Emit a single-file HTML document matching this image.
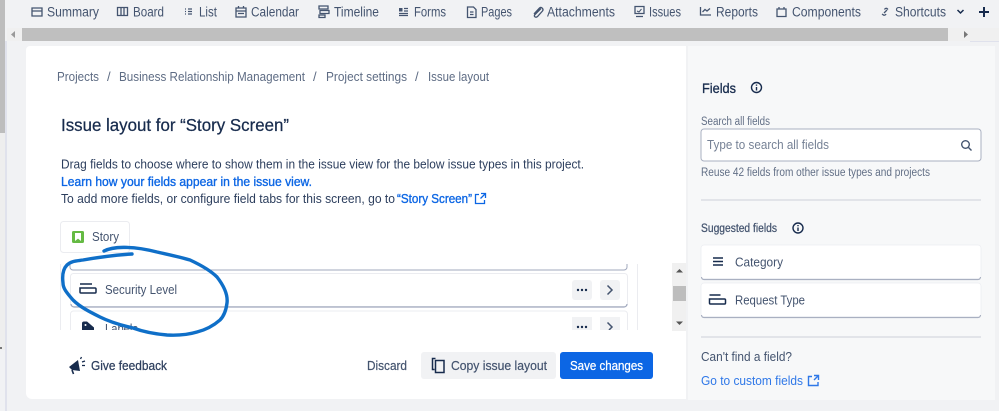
<!DOCTYPE html>
<html><head><meta charset="utf-8"><style>
html,body{margin:0;padding:0;background:#f1f2f4;width:999px;height:411px;overflow:hidden}
svg{display:block}
text{font-family:"Liberation Sans",sans-serif}
.n{font-size:13.5px;fill:#44546f}
.b{font-size:13px;fill:#5e6c84}
.d{font-size:13px;fill:#2c3e5d}
.l{font-size:13px;fill:#0c66e4;stroke:#0c66e4;stroke-width:.35px}
.f{font-size:12.5px;fill:#44546f}
.s{font-size:11.5px;fill:#626f86}
.i{fill:none;stroke:#44546f;stroke-width:1.3}
.k{fill:none;stroke:#172b4d;stroke-width:1.5}
</style></head><body>
<svg width="999" height="411" viewBox="0 0 999 411" xmlns="http://www.w3.org/2000/svg">
<rect width="999" height="411" fill="#f1f2f4"/>
<!-- left strip -->
<rect x="0" y="0" width="5" height="350" fill="#eeeeee"/>
<rect x="0" y="0" width="5" height="133" fill="#bdbdbd"/>
<rect x="5" y="41" width="2" height="370" fill="#e0e2ec"/>
<rect x="0" y="347" width="2" height="2" fill="#777"/>
<!-- horizontal scrollbar -->
<rect x="7" y="28" width="992" height="13" fill="#f0f0f0"/>
<rect x="22" y="28" width="926" height="13" fill="#bfbfbf"/>
<path d="M11 34.5l4-3.5v7z" fill="#9a9a9a"/>
<path d="M968 34.500l-4-3.500v7z" fill="#777"/>
<rect x="970" y="41" width="29" height="1" fill="#dfe1ec"/>
<!-- nav -->
<g>
<path class="i" d="M32 8h10v8h-10zM32 11h10"/>
<text class="n" x="47" y="16.500" textLength="52" lengthAdjust="spacingAndGlyphs">Summary</text>
<path class="i" d="M117.500 7.500h10v8h-10zM121 7.500v8M124 7.500v8"/>
<text class="n" x="133" y="16.500" textLength="31" lengthAdjust="spacingAndGlyphs">Board</text>
<path class="i" d="M185 9h1M188 9h4M185 11.500h1M188 11.500h4M185 14h1M188 14h4" stroke-width="1"/>
<text class="n" x="199" y="16.500" textLength="18" lengthAdjust="spacingAndGlyphs">List</text>
<path class="i" d="M236 8h10v9h-10zM236 11h10M238.500 6v2M243.500 6v2M238 13.500h6"/>
<text class="n" x="251" y="16.500" textLength="48" lengthAdjust="spacingAndGlyphs">Calendar</text>
<path class="i" d="M319 6h9v3h-9zM320 10.500h9v3h-9zM319 15h6v2.500h-6z"/>
<text class="n" x="334" y="16.500" textLength="45" lengthAdjust="spacingAndGlyphs">Timeline</text>
<rect x="399" y="8" width="3.500" height="3.500" fill="#44546f"/>
<path class="i" d="M404 8.500h4M404 11h4M399 13.500h9M399 15.500h9" stroke-width="1"/>
<text class="n" x="414" y="16.500" textLength="32" lengthAdjust="spacingAndGlyphs">Forms</text>
<path class="i" d="M467.500 7h6l2.500 2.500v8h-8.500zM470 12h3.500M470 14.500h3.500"/>
<text class="n" x="481" y="16.500" textLength="31" lengthAdjust="spacingAndGlyphs">Pages</text>
<path class="i" d="M541 8.500l-6 6c-2 2 1 3.500 2.500 2l5-5.500c1.500-2-1-4.500-3-3l-5.500 6"/>
<text class="n" x="547" y="16.500" textLength="68" lengthAdjust="spacingAndGlyphs">Attachments</text>
<path class="i" d="M635 6.500h9v7h-9zM636 16.500h7"/>
<path d="M637 11l2 1 2.500-3" fill="none" stroke="#44546f"/>
<text class="n" x="649" y="16.500" textLength="32" lengthAdjust="spacingAndGlyphs">Issues</text>
<path class="i" d="M700.500 7v8h10.500M702.500 12l2.500-2.500 2 1.500 3-2.500"/>
<text class="n" x="716" y="16.500" textLength="42" lengthAdjust="spacingAndGlyphs">Reports</text>
<path class="i" d="M777 9h9v7.500h-9zM779 9V7M784 9V7"/>
<text class="n" x="792" y="16.500" textLength="69" lengthAdjust="spacingAndGlyphs">Components</text>
<path class="i" d="M882 14l1.500 1c1 .5 2 0 2.500-1M888 9.500l-1-1c-1-.5-2 0-2.500 1M884 13l3-3" stroke-width="1"/>
<text class="n" x="895" y="16.500" textLength="51" lengthAdjust="spacingAndGlyphs">Shortcuts</text>
<path d="M957.500 10l3 3 3-3" fill="none" stroke="#172b4d" stroke-width="1.500"/>
<path d="M979 12h10M984 7v10" fill="none" stroke="#172b4d" stroke-width="2"/>
</g>
<!-- main card -->
<path d="M26 50a4 4 0 0 1 4-4h656v353H32a6 6 0 0 1-6-6z" fill="#fff"/>
<rect x="688" y="46" width="307" height="354" fill="#f7f8f9"/>
<!-- breadcrumb -->
<text class="b" x="57" y="81" textLength="42" lengthAdjust="spacingAndGlyphs">Projects</text>
<text class="b" x="107" y="81">/</text>
<text class="b" x="119" y="81" textLength="186" lengthAdjust="spacingAndGlyphs">Business Relationship Management</text>
<text class="b" x="313" y="81">/</text>
<text class="b" x="326" y="81" textLength="81" lengthAdjust="spacingAndGlyphs">Project settings</text>
<text class="b" x="415" y="81">/</text>
<text class="b" x="428" y="81" textLength="61" lengthAdjust="spacingAndGlyphs">Issue layout</text>
<!-- title -->
<text x="61" y="131" font-size="17.500" fill="#172b4d" stroke="#172b4d" stroke-width=".25" textLength="228" lengthAdjust="spacingAndGlyphs">Issue layout for “Story Screen”</text>
<text class="d" x="61" y="168.500" textLength="523" lengthAdjust="spacingAndGlyphs">Drag fields to choose where to show them in the issue view for the below issue types in this project.</text>
<text class="l" x="61" y="186" textLength="251" lengthAdjust="spacingAndGlyphs">Learn how your fields appear in the issue view.</text>
<text class="d" x="61" y="203" textLength="334" lengthAdjust="spacingAndGlyphs">To add more fields, or configure field tabs for this screen, go to</text>
<text class="l" x="397" y="203" textLength="75" lengthAdjust="spacingAndGlyphs">“Story Screen”</text>
<path d="M479 194.500h-3.500v9h9v-3.500M481 193.500h4.500v4.500M485 194l-4.500 4.500" fill="none" stroke="#0c66e4" stroke-width="1.300"/>
<!-- Story tab -->
<rect x="60.500" y="221.500" width="69" height="31" rx="3" fill="#fff" stroke="#ebecf0"/>
<rect x="72" y="231" width="12" height="12" rx="1.500" fill="#65ba43"/>
<path d="M75 233h6v8l-3-2.400-3 2.400z" fill="#fff"/>
<text class="f" x="92" y="241" font-size="13" textLength="27" lengthAdjust="spacingAndGlyphs">Story</text>
<!-- list area -->
<rect x="60" y="264" width="1" height="66" fill="#ebecf0"/>
<rect x="637" y="264" width="1" height="66" fill="#ebecf0"/>
<path d="M70 264v3a3 3 0 0 0 3 3h551a3 3 0 0 0 3-3v-3" fill="#fff" stroke="#a0a8bd" stroke-width="1"/>
<rect x="70.500" y="273.500" width="557" height="33" rx="3" fill="#fff" stroke="#ebecf0"/>
<path d="M71 304a3 3 0 0 0 3 3h550a3 3 0 0 0 3-3" fill="none" stroke="#a0a8bd" stroke-width="1.200"/>
<path d="M70.500 330v-16a3 3 0 0 1 3-3h551a3 3 0 0 1 3 3v16" fill="#fff" stroke="#ebecf0"/>
<path class="k" d="M80 284h12M80 288h15a1 1 0 0 1 1 1v3a1 1 0 0 1-1 1H81a1 1 0 0 1-1-1z"/>
<text class="f" x="105" y="294" textLength="72" lengthAdjust="spacingAndGlyphs">Security Level</text>
<path d="M82 330v-6.500a2 2 0 0 1 2-2h3l7 6v2.500z" fill="#172b4d"/>
<circle cx="85.500" cy="325" r="1" fill="#fff"/>
<text class="f" x="105" y="333" textLength="33" lengthAdjust="spacingAndGlyphs">Labels</text>
<rect x="572" y="280" width="20" height="20" rx="3" fill="#f1f2f4"/>
<rect x="600" y="280" width="20" height="20" rx="3" fill="#f1f2f4"/>
<g fill="#172b4d"><circle cx="578" cy="290" r="1.200"/><circle cx="582" cy="290" r="1.200"/><circle cx="586" cy="290" r="1.200"/></g>
<path d="M607.500 285.500l4.500 4.500-4.500 4.500" fill="none" stroke="#44546f" stroke-width="1.500"/>
<rect x="572" y="317" width="20" height="13" fill="#f1f2f4"/>
<rect x="600" y="317" width="20" height="13" fill="#f1f2f4"/>
<g fill="#172b4d"><circle cx="578" cy="327" r="1.200"/><circle cx="582" cy="327" r="1.200"/><circle cx="586" cy="327" r="1.200"/></g>
<path d="M607.500 322.500l4.500 4.500-3 3" fill="none" stroke="#44546f" stroke-width="1.500"/>
<rect x="60" y="330" width="612" height="7" fill="#fff"/>
<!-- vertical scroll -->
<rect x="672" y="263" width="14" height="68" fill="#f0f0f0"/>
<rect x="673" y="286" width="13" height="15" fill="#bdbdbd"/>
<path d="M679.500 269l-3.500 3.500h7z" fill="#555"/>
<path d="M679.500 325l-3.500-3.500h7z" fill="#555"/>
<!-- blue circle -->
<path d="M104 251C112 247 130 245 157 252C170 255 180 257 190 260C205 267 212 272 217 277C224 286 228 295 227 303C226 311 224 316 220 320C212 327 205 330 197 332C187 335 177 335.500 167 335C155 334 144 332 133 328C120 325 110 322 100 317C90 312 80 307 73 300C66 292 63 288 63 283C62 275 63 269 67 265C71 261 76 261 83 260C100 257 115 255 132 254" fill="none" stroke="#0f6fc8" stroke-width="3.400" stroke-linecap="round" stroke-linejoin="round"/>
<!-- footer -->
<path d="M69 367l9-7 2 11-8-1z" fill="#172b4d"/>
<path d="M72 370l1.500 4" stroke="#172b4d" stroke-width="1.600" fill="none"/>
<path d="M80.500 359l1-2M82 362l3-1M82 365.500h3" stroke="#172b4d" stroke-width="1.300" fill="none"/>
<text x="91" y="370" font-size="13" fill="#2c3e5d" stroke="#2c3e5d" stroke-width=".25" textLength="76" lengthAdjust="spacingAndGlyphs">Give feedback</text>
<text x="367" y="370" font-size="13" fill="#44546f" stroke="#44546f" stroke-width=".2" textLength="40" lengthAdjust="spacingAndGlyphs">Discard</text>
<rect x="421" y="352" width="135" height="27" rx="3" fill="#f1f2f4"/>
<path d="M435.500 358.500h-3v11h2M435.500 360.500h8.500v12h-8.500z" fill="none" stroke="#172b4d" stroke-width="1.500"/>
<text x="451" y="370" font-size="13" fill="#44546f" stroke="#44546f" stroke-width=".2" textLength="96" lengthAdjust="spacingAndGlyphs">Copy issue layout</text>
<rect x="560" y="352" width="93" height="27" rx="3" fill="#0c66e4"/>
<text x="570" y="370" font-size="13" fill="#fff" stroke="#fff" stroke-width=".25" textLength="73" lengthAdjust="spacingAndGlyphs">Save changes</text>
<!-- right panel -->
<text x="702" y="93" font-size="14" fill="#172b4d" stroke="#172b4d" stroke-width=".3" textLength="34" lengthAdjust="spacingAndGlyphs">Fields</text>
<circle cx="756.500" cy="87.500" r="5" fill="none" stroke="#172b4d" stroke-width="1.400"/>
<path d="M756.500 87v3.500M756.500 84.500v1.200" stroke="#172b4d" stroke-width="1.400"/>
<text class="s" x="701" y="125" textLength="69" lengthAdjust="spacingAndGlyphs">Search all fields</text>
<rect x="701" y="129" width="280" height="32" rx="3" fill="#fff" stroke="#a9b0c1"/>
<text x="707" y="149" font-size="13" fill="#758195" textLength="122" lengthAdjust="spacingAndGlyphs">Type to search all fields</text>
<circle cx="965.500" cy="144.500" r="3.800" fill="none" stroke="#44546f" stroke-width="1.400"/>
<path d="M968.500 147.500l3 3" stroke="#44546f" stroke-width="1.400"/>
<text class="s" x="701" y="176" textLength="229" lengthAdjust="spacingAndGlyphs">Reuse 42 fields from other issue types and projects</text>
<rect x="701" y="199" width="280" height="2" fill="#e2e4e9"/>
<text x="701" y="232" font-size="11.500" fill="#44546f" stroke="#44546f" stroke-width=".25" textLength="76" lengthAdjust="spacingAndGlyphs">Suggested fields</text>
<circle cx="798" cy="228" r="5" fill="none" stroke="#172b4d" stroke-width="1.400"/>
<path d="M798 227.500v3.500M798 225v1.200" stroke="#172b4d" stroke-width="1.400"/>
<rect x="701" y="245" width="280" height="34" rx="3" fill="#fff" stroke="#eceef2" stroke-width=".8"/>
<path d="M701.500 277a2.500 2.500 0 0 0 2.500 2.500h274a2.500 2.500 0 0 0 2.500-2.500" fill="none" stroke="#a9b0c1" stroke-width="1.200"/>
<path d="M713 258h10M713 261.500h10M713 265h10" stroke="#172b4d" stroke-width="1.600"/>
<text class="f" x="735" y="266.500" textLength="48" lengthAdjust="spacingAndGlyphs">Category</text>
<rect x="701" y="283" width="280" height="34" rx="3" fill="#fff" stroke="#eceef2" stroke-width=".8"/>
<path d="M701.500 315a2.500 2.500 0 0 0 2.500 2.500h274a2.500 2.500 0 0 0 2.500-2.500" fill="none" stroke="#a9b0c1" stroke-width="1.200"/>
<path class="k" d="M709.500 295h11M709.500 299h15a1 1 0 0 1 1 1v3a1 1 0 0 1-1 1h-14a1 1 0 0 1-1-1z"/>
<text class="f" x="735" y="304.500" textLength="70" lengthAdjust="spacingAndGlyphs">Request Type</text>
<rect x="701" y="336" width="280" height="2" fill="#e2e4e9"/>
<text class="f" x="701" y="361" textLength="91" lengthAdjust="spacingAndGlyphs">Can't find a field?</text>
<text x="701" y="385" font-size="12.500" fill="#2f78e8" textLength="102" lengthAdjust="spacingAndGlyphs">Go to custom fields</text>
<path d="M812 376.500h-3.500v9h9.500v-3.500M814 375.500h4.500v4.500M818 376l-4 4" fill="none" stroke="#2f78e8" stroke-width="1.400"/>
</svg>
</body></html>
